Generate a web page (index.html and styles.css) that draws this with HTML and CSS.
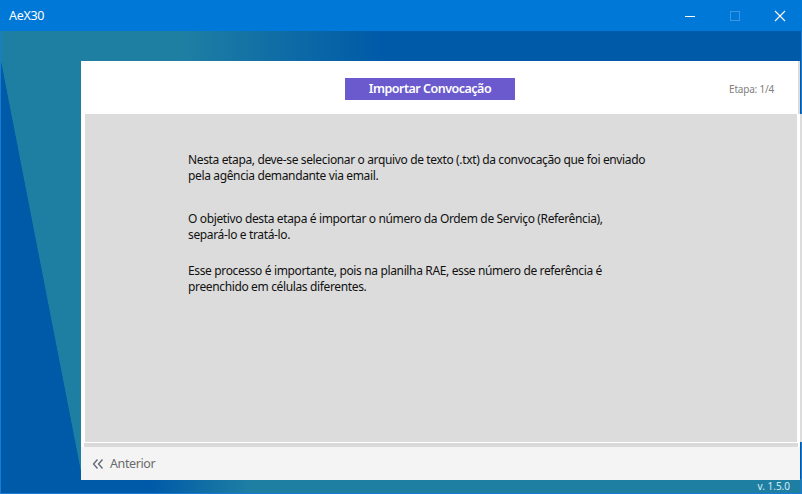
FILE: index.html
```html
<!DOCTYPE html>
<html lang="pt-BR">
<head>
<meta charset="utf-8">
<title>AeX30</title>
<link rel="stylesheet" href="styles.css">
</head>
<body>
<div class="window">
  <div class="titlebar">
    <span class="title">AeX30</span>
    <div class="controls">
      <span class="ctl">
        <svg width="12" height="12" viewBox="0 0 12 12"><path d="M1 6.5H11" stroke="#fff" stroke-width="1"/></svg>
      </span>
      <span class="ctl">
        <svg width="12" height="12" viewBox="0 0 12 12"><rect x="1.5" y="1.5" width="9" height="9" fill="none" stroke="#3e95e2" stroke-width="1"/></svg>
      </span>
      <span class="ctl">
        <svg width="12" height="12" viewBox="0 0 12 12"><path d="M1 1L11 11M11 1L1 11" stroke="#fff" stroke-width="1.1"/></svg>
      </span>
    </div>
  </div>
  <div class="client">
    <div class="card">
      <div class="card-head">
        <button class="step-btn">Importar Convocação</button>
        <span class="etapa">Etapa: 1/4</span>
      </div>
      <div class="card-body">
        <p>Nesta etapa, deve-se selecionar o arquivo de texto (.txt) da convocação que foi enviado<br>pela agência demandante via email.</p>
        <p class="p2">O objetivo desta etapa é importar o número da Ordem de Serviço (Referência),<br>separá-lo e tratá-lo.</p>
        <p class="p3">Esse processo é importante, pois na planilha RAE, esse número de referência é<br>preenchido em células diferentes.</p>
      </div>
      <div class="card-sep"></div>
      <div class="card-foot">
        <span class="prev">
          <svg width="12" height="12" viewBox="0 0 12 12"><path d="M5.5 1.5L1.5 6L5.5 10.5M10.5 1.5L6.5 6L10.5 10.5" fill="none" stroke="#5d6670" stroke-width="1.3"/></svg>
          Anterior
        </span>
      </div>
    </div>
    <div class="version">v. 1.5.0</div>
  </div>
</div>
</body>
</html>
```
FILE: styles.css
```css
html, body {
  margin: 0;
  padding: 0;
  width: 802px;
  height: 494px;
  overflow: hidden;
  font-family: "Noto Sans", "Open Sans", sans-serif;
}

.window {
  width: 802px;
  height: 494px;
  box-sizing: border-box;
  border: 1px solid #1a7bd6;
  border-top: none;
  display: flex;
  flex-direction: column;
}

.titlebar {
  height: 31px;
  flex: none;
  background: #0078d7;
  margin: 0 -1px;
  display: flex;
  align-items: center;
  color: #fff;
}

.title {
  font-size: 12.5px;
  letter-spacing: -0.3px;
  padding-left: 9px;
  padding-bottom: 1px;
}

.controls {
  margin-left: auto;
  display: flex;
}

.ctl {
  width: 45px;
  height: 31px;
  display: flex;
  align-items: center;
  justify-content: center;
}

.client {
  flex: 1;
  display: flex;
  flex-direction: column;
  background-color: #1f7fa3;
  background-image:
    linear-gradient(to top right, #005aa8 50%, transparent 50.5%),
    linear-gradient(to right, #005aa8 150px, #1f7fa3 250px),
    linear-gradient(to right, #1f7fa3 180px, #005aa8 380px);
  background-size: 84px 431px, 100% 14px, 100% 100%;
  background-position: 0 32px, 0 100%, 0 0;
  background-repeat: no-repeat;
}

.card {
  margin: 30px 1px 0 80px;
  background: #fff;
  display: flex;
  flex-direction: column;
  height: 419px;
}

.card-head {
  height: 53px;
  flex: none;
  display: flex;
  align-items: center;
  border-right: 2px solid #dcdcdc;
}

.step-btn {
  margin-left: 264px;
  width: 170px;
  height: 22px;
  border: none;
  background: #6a5acd;
  color: #fff;
  font-family: "Noto Sans", "Open Sans", sans-serif;
  font-weight: 600;
  font-size: 12.5px;
  letter-spacing: -0.5px;
  padding: 0;
  margin-top: 2px;
}

.etapa {
  margin-left: auto;
  margin-right: 24px;
  font-size: 10px;
  letter-spacing: -0.2px;
  color: #808080;
  margin-top: 2px;
}

.card-body {
  flex: 1;
  background: #dcdcdc;
  margin-left: 4px;
  border-right: 3px solid #fff;
  box-shadow: 2px 0 0 #dcdcdc;
  padding: 38px 0 0 103px;
  color: #111;
  font-size: 12px;
  letter-spacing: -0.36px;
  line-height: 16px;
}

.card-body p {
  margin: 0;
}

.card-body .p2 {
  margin-top: 27px;
}

.card-body .p3 {
  margin-top: 20px;
}

.card-sep {
  height: 4px;
  flex: none;
  margin: 1px 2px 0 3px;
  background: #dadada;
}

.card-foot {
  height: 33px;
  flex: none;
  background: #f4f4f4;
  display: flex;
  align-items: center;
  padding-left: 11px;
}

.prev {
  display: flex;
  align-items: center;
  gap: 6px;
  font-size: 12.5px;
  letter-spacing: -0.4px;
  color: #6a6a6a;
}

.version {
  margin-left: auto;
  margin-right: 11px;
  font-size: 10px;
  color: #d6ecf4;
  line-height: 13px;
}
```
